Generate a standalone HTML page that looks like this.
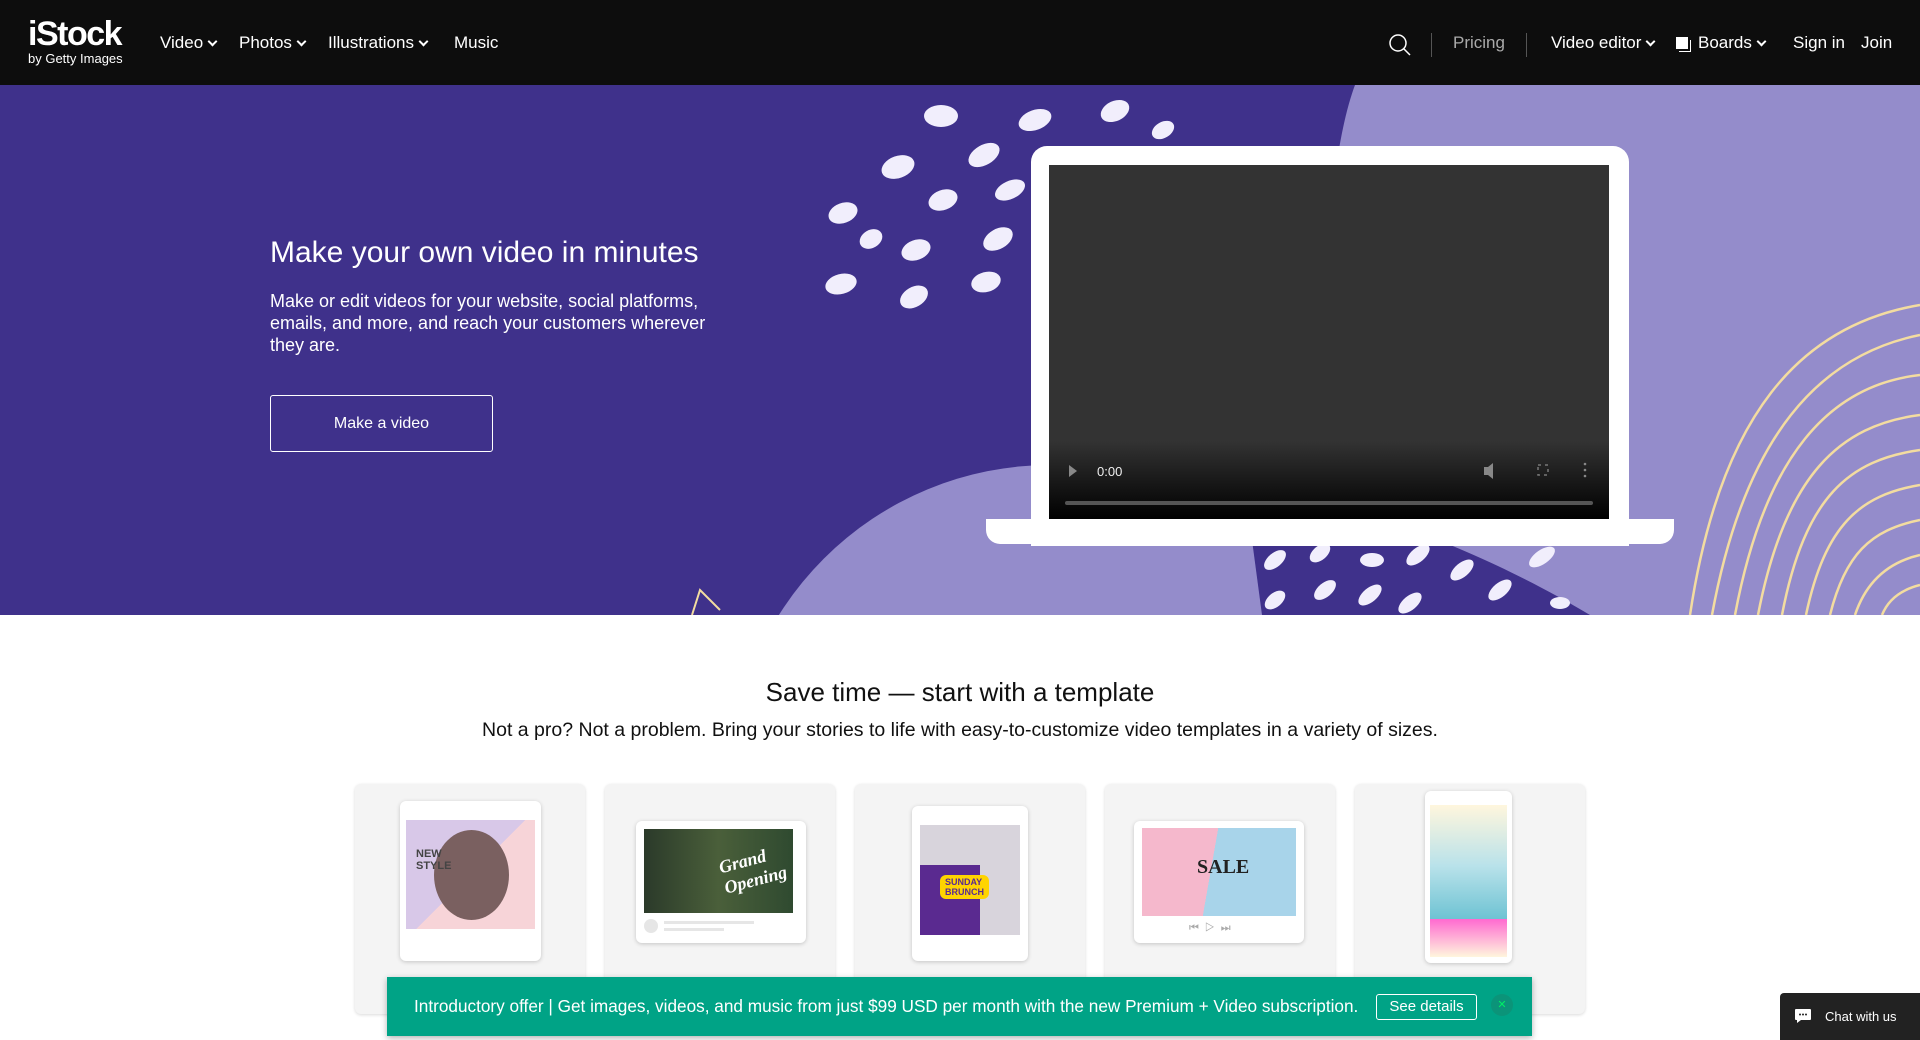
<!DOCTYPE html>
<html><head><meta charset="utf-8"><style>
*{margin:0;padding:0;box-sizing:border-box}
html,body{width:1920px;height:1040px;overflow:hidden}
body{font-family:"Liberation Sans",sans-serif;background:#fff;position:relative}
.nav{position:absolute;left:0;top:0;width:1920px;height:85px;background:#0d0d0d;color:#fff}
.logo{position:absolute;left:28px;top:17px;line-height:1}
.logo b{font-size:34px;letter-spacing:-1.5px;display:block}
.logo i{font-style:normal;font-size:13px;display:block;margin-top:1px}
.ni{position:absolute;top:33px;font-size:17px}
.ni .c{display:inline-block;width:7px;height:7px;border-right:2px solid #fff;border-bottom:2px solid #fff;transform:rotate(45deg);margin-left:6px;position:relative;top:-3px}
.sep{position:absolute;top:33px;width:1px;height:24px;background:#555}
.hero{position:absolute;left:0;top:85px;width:1920px;height:530px;background:#3f318b;overflow:hidden}
h1{position:absolute;left:270px;top:151px;font-size:30px;font-weight:400;color:#fff}
.p{position:absolute;left:270px;top:205px;width:470px;font-size:18px;line-height:22px;color:#fff}
.btn{position:absolute;left:270px;top:310px;width:223px;height:57px;border:1px solid #fff;border-radius:3px;color:#fff;font-size:16px;text-align:center;line-height:55px}
.lap{position:absolute;left:1031px;top:61px;width:598px;height:400px;background:#fff;border-radius:16px 16px 0 0}
.scr{position:absolute;left:1049px;top:80px;width:560px;height:354px;background:linear-gradient(#333 0,#333 78%,#000 100%)}
.base{position:absolute;left:986px;top:434px;width:688px;height:25px;background:#fff;border-radius:0 0 14px 14px}
h2{position:absolute;top:677px;width:1920px;text-align:center;font-size:26px;font-weight:400;color:#111}
.sub{position:absolute;top:719px;width:1920px;text-align:center;font-size:19.5px;color:#111}
.card{position:absolute;top:784px;width:230px;height:230px;background:#f4f4f4;border-radius:6px;box-shadow:0 1px 3px rgba(0,0,0,.15)}
.post{position:absolute;background:#fff;border-radius:6px;box-shadow:0 1px 4px rgba(0,0,0,.2)}
.img{position:absolute}
.banner{position:absolute;left:387px;top:977px;width:1145px;height:59px;background:#00a386;color:#fff;font-size:17.2px;line-height:59px;padding-left:27px;box-shadow:0 2px 6px rgba(0,0,0,.3);white-space:nowrap}
.sd{position:absolute;left:989px;top:17px;width:101px;height:26px;border:1px solid #fff;border-radius:3px;line-height:24px;text-align:center;font-size:15px}
.chat{position:absolute;left:1780px;top:993px;width:140px;height:47px;background:#222;color:#fff;font-size:13px;line-height:47px;padding-left:45px;border-radius:4px 0 0 0}
</style></head><body>
<div class="nav">
<div class="logo"><b>iStock</b><i>by Getty Images</i></div>
<div class="ni" style="left:160px">Video<span class="c"></span></div>
<div class="ni" style="left:239px">Photos<span class="c"></span></div>
<div class="ni" style="left:328px">Illustrations<span class="c"></span></div>
<div class="ni" style="left:454px">Music</div>
<svg style="position:absolute;left:1388px;top:33px" width="24" height="24"><circle cx="10" cy="10" r="8" fill="none" stroke="#fff" stroke-width="1.5"/><line x1="16" y1="16" x2="22" y2="22" stroke="#fff" stroke-width="1.5"/></svg>
<div class="sep" style="left:1431px"></div>
<div class="ni" style="left:1453px;color:#aaa">Pricing</div>
<div class="sep" style="left:1526px"></div>
<div class="ni" style="left:1551px">Video editor<span class="c"></span></div>
<div style="position:absolute;left:1676px;top:37px;width:12px;height:12px;background:#fff;box-shadow:2px 2px 0 -0px #0d0d0d,3px 3px 0 #fff"></div>
<div class="ni" style="left:1698px">Boards<span class="c"></span></div>
<div class="ni" style="left:1793px">Sign in</div>
<div class="ni" style="left:1861px">Join</div>
</div>
<div class="hero">
<svg width="1920" height="530" style="position:absolute;left:0;top:0">
<path d="M1355 0 L1920 0 L1920 530 L1300 530 C1310 420 1320 300 1325 200 C1330 110 1340 40 1355 0Z" fill="#948ccb"/>
<circle cx="1050" cy="700" r="320" fill="#948ccb"/>
<path d="M1250 440 L1400 440 C1480 470 1540 500 1590 530 L1262 530 Z" fill="#3f318b"/>
<g fill="none" stroke="#f3dca0" stroke-width="2.5">
<path d="M1920 220 C1800 240 1720 330 1690 530"/><path d="M1920 250 C1820 270 1745 350 1712 530"/>
<path d="M1920 290 C1830 300 1765 370 1735 530"/><path d="M1920 330 C1840 340 1785 390 1758 530"/>
<path d="M1920 365 C1850 375 1805 410 1782 530"/><path d="M1920 400 C1860 410 1825 440 1806 530"/>
<path d="M1920 435 C1870 445 1845 470 1830 530"/><path d="M1920 470 C1885 478 1865 500 1855 530"/>
<path d="M1920 500 C1900 505 1888 515 1882 530"/>
</g>
<path d="M692 530 L700 505 L720 525" fill="none" stroke="#f3dca0" stroke-width="2"/>
<g fill="#f1eefc">
<ellipse cx="941" cy="31" rx="17" ry="11"/><ellipse cx="1035" cy="35" rx="17" ry="10" transform="rotate(-20 1035 35)"/><ellipse cx="1115" cy="26" rx="15" ry="10" transform="rotate(-25 1115 26)"/><ellipse cx="1163" cy="45" rx="12" ry="8" transform="rotate(-30 1163 45)"/>
<ellipse cx="898" cy="82" rx="17" ry="11" transform="rotate(-20 898 82)"/><ellipse cx="984" cy="70" rx="17" ry="10" transform="rotate(-30 984 70)"/>
<ellipse cx="943" cy="115" rx="15" ry="10" transform="rotate(-20 943 115)"/><ellipse cx="1010" cy="105" rx="16" ry="9" transform="rotate(-25 1010 105)"/>
<ellipse cx="843" cy="128" rx="15" ry="10" transform="rotate(-20 843 128)"/><ellipse cx="871" cy="154" rx="12" ry="9" transform="rotate(-30 871 154)"/>
<ellipse cx="916" cy="165" rx="15" ry="10" transform="rotate(-20 916 165)"/><ellipse cx="998" cy="154" rx="16" ry="10" transform="rotate(-30 998 154)"/>
<ellipse cx="841" cy="199" rx="16" ry="10" transform="rotate(-15 841 199)"/><ellipse cx="914" cy="212" rx="15" ry="10" transform="rotate(-30 914 212)"/><ellipse cx="986" cy="197" rx="15" ry="10" transform="rotate(-15 986 197)"/>
<ellipse cx="1275" cy="475" rx="13" ry="7" transform="rotate(-40 1275 475)"/><ellipse cx="1320" cy="468" rx="12" ry="7" transform="rotate(-40 1320 468)"/><ellipse cx="1372" cy="475" rx="12" ry="7"/><ellipse cx="1418" cy="470" rx="14" ry="7" transform="rotate(-40 1418 470)"/><ellipse cx="1462" cy="485" rx="14" ry="7" transform="rotate(-40 1462 485)"/><ellipse cx="1542" cy="472" rx="15" ry="7" transform="rotate(-35 1542 472)"/>
<ellipse cx="1275" cy="515" rx="12" ry="7" transform="rotate(-40 1275 515)"/><ellipse cx="1325" cy="505" rx="13" ry="7" transform="rotate(-40 1325 505)"/><ellipse cx="1370" cy="510" rx="14" ry="7" transform="rotate(-40 1370 510)"/><ellipse cx="1410" cy="518" rx="14" ry="7" transform="rotate(-40 1410 518)"/><ellipse cx="1500" cy="505" rx="14" ry="7" transform="rotate(-40 1500 505)"/><ellipse cx="1560" cy="518" rx="10" ry="6"/>
</g>
</svg>
<h1>Make your own video in minutes</h1>
<div class="p">Make or edit videos for your website, social platforms, emails, and more, and reach your customers wherever they are.</div>
<div class="btn">Make a video</div>
<div class="lap"></div>
<div class="scr">
<svg width="560" height="354" style="position:absolute;left:0;top:0">
<path d="M20 300 L28 306 L20 312Z" fill="#888"/>
<text x="48" y="311" fill="#eee" font-size="13" font-family="Liberation Sans">0:00</text>
<path d="M435 302 h4 l5 -4 v16 l-5 -4 h-4z" fill="#888"/>
<rect x="489" y="300" width="10" height="10" fill="none" stroke="#777" stroke-width="1.5" stroke-dasharray="3 4"/>
<circle cx="536" cy="299" r="1.3" fill="#888"/><circle cx="536" cy="305" r="1.3" fill="#888"/><circle cx="536" cy="311" r="1.3" fill="#888"/>
<rect x="16" y="336" width="528" height="4" rx="2" fill="#555"/>
</svg>
</div>
<div class="base"></div>
</div>
<h2>Save time — start with a template</h2>
<div class="sub">Not a pro? Not a problem. Bring your stories to life with easy-to-customize video templates in a variety of sizes.</div>

<div class="card" style="left:355px"><div class="post" style="left:45px;top:17px;width:141px;height:160px"><div class="img" style="left:6px;top:19px;width:129px;height:109px;background:linear-gradient(135deg,#d8c8e8 50%,#f7d4d8 50%)"><div style="position:absolute;left:28px;top:10px;width:75px;height:90px;border-radius:50%;background:#7a6060"></div><div style="position:absolute;left:10px;top:28px;font-size:11px;font-weight:bold;color:#444;line-height:12px">NEW<br>STYLE</div></div></div></div>
<div class="card" style="left:605px"><div class="post" style="left:31px;top:37px;width:170px;height:122px"><div class="img" style="left:8px;top:8px;width:149px;height:84px;background:linear-gradient(90deg,#2b3a2a,#4a5f3a 50%,#2f4a30)"><div style="position:absolute;right:8px;top:20px;color:#fff;font-style:italic;font-weight:bold;font-size:18px;transform:rotate(-15deg);font-family:'Liberation Serif',serif">Grand<br>Opening</div></div><div style="position:absolute;left:8px;top:98px;width:14px;height:14px;border-radius:50%;background:#e6e6e6"></div><div style="position:absolute;left:28px;top:100px;width:90px;height:3px;background:#e6e6e6"></div><div style="position:absolute;left:28px;top:107px;width:60px;height:3px;background:#e6e6e6"></div></div></div>
<div class="card" style="left:855px"><div class="post" style="left:57px;top:22px;width:116px;height:155px"><div class="img" style="left:8px;top:19px;width:100px;height:110px;background:#d8d4dc"><div style="position:absolute;left:0;top:40px;width:60px;height:70px;background:#5a2a90"></div><div style="position:absolute;left:20px;top:50px;background:#ffd400;color:#5a2a90;font-size:9px;font-weight:bold;padding:2px 5px;border-radius:6px">SUNDAY<br>BRUNCH</div></div></div></div>
<div class="card" style="left:1105px"><div class="post" style="left:29px;top:37px;width:170px;height:122px"><div class="img" style="left:8px;top:7px;width:154px;height:88px;background:linear-gradient(100deg,#f5b8cc 45%,#a8d4ea 45%)"><div style="position:absolute;left:55px;top:28px;font-family:'Liberation Serif',serif;font-weight:bold;font-size:20px;color:#222">SALE</div></div><div style="position:absolute;left:55px;top:101px;font-size:11px;color:#aaa;letter-spacing:6px">⏮▷⏭</div></div></div>
<div class="card" style="left:1355px"><div class="post" style="left:70px;top:7px;width:87px;height:172px"><div class="img" style="left:5px;top:14px;width:77px;height:152px;background:linear-gradient(180deg,#fff6dd 0,#b9e2ea 40%,#6ec3d3 75%,#ff6ad0 75%,#fff6dd 100%)"></div></div></div>

<div class="banner">Introductory offer | Get images, videos, and music from just $99 USD per month with the new Premium + Video subscription.<div class="sd">See details</div><div style="position:absolute;left:1104px;top:17px;width:22px;height:22px;border-radius:50%;background:#0b9479;color:#0e6;font-size:11px;line-height:22px;text-align:center">✕</div></div>
<div class="chat"><svg style="position:absolute;left:14px;top:15px" width="18" height="16"><path d="M2 1h14a1 1 0 0 1 1 1v9a1 1 0 0 1-1 1H7l-4 3v-3H2a1 1 0 0 1-1-1V2a1 1 0 0 1 1-1z" fill="#fff"/><circle cx="6" cy="6.5" r="1" fill="#222"/><circle cx="9" cy="6.5" r="1" fill="#222"/><circle cx="12" cy="6.5" r="1" fill="#222"/></svg>Chat with us</div>
</body></html>
